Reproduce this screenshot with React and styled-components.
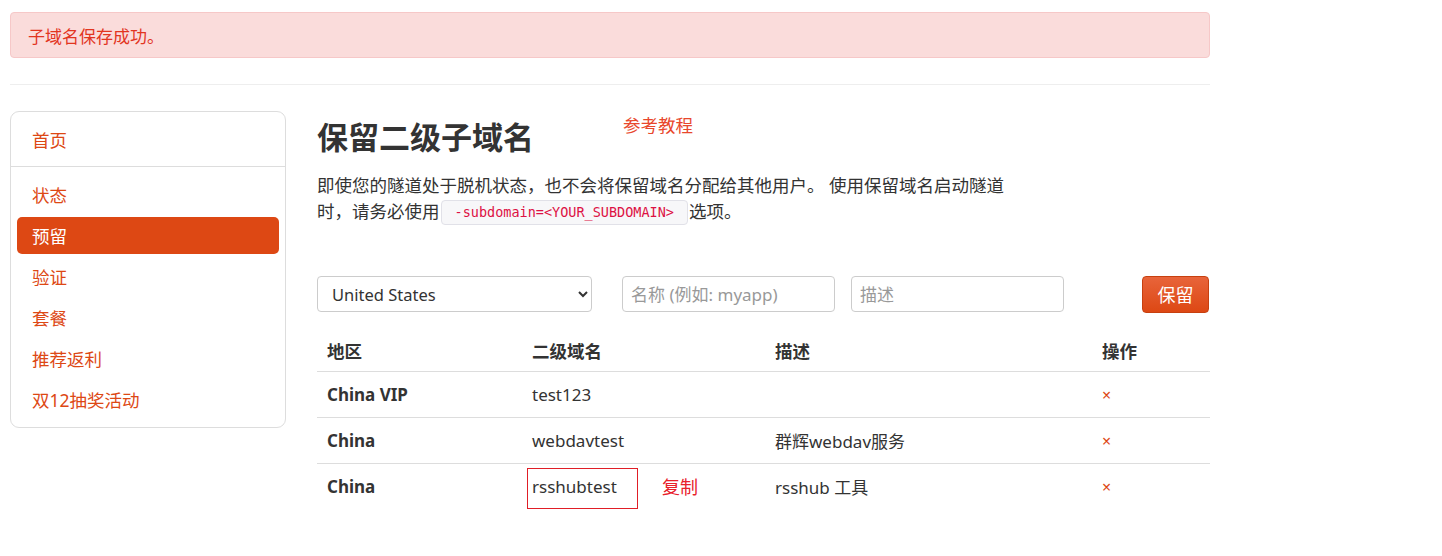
import React from 'react';
import styled, { createGlobalStyle } from 'styled-components';

const GlobalStyle = createGlobalStyle`
  body {
    margin: 0;
    background: #fff;
    font-family: "Noto Sans", "Noto Sans CJK SC", sans-serif;
    color: #333;
  }
`;

const menu = ['状态', '预留', '验证', '套餐', '推荐返利', '双12抽奖活动'];

const rows = [
  { region: 'China VIP', sub: 'test123', desc: '' },
  { region: 'China', sub: 'webdavtest', desc: '群辉webdav服务' },
  { region: 'China', sub: 'rsshubtest', desc: 'rsshub 工具', marked: true },
];

const App = () => (
  <>
    <GlobalStyle />
    <Page>
      <Alert>子域名保存成功。</Alert>
      <Rule />
      <Layout>
        <Sidebar>
          <Home>首页</Home>
          <Nav>
            {menu.map((item) => (
              <NavItem key={item} $active={item === '预留'}>{item}</NavItem>
            ))}
          </Nav>
        </Sidebar>
        <Main>
          <TitleRow>
            <Title>保留二级子域名</Title>
            <TutorialLink>参考教程</TutorialLink>
          </TitleRow>
          <Lead>
            即使您的隧道处于脱机状态，也不会将保留域名分配给其他用户。 使用保留域名启动隧道时，请务必使用
            <Code>-subdomain=&lt;YOUR_SUBDOMAIN&gt;</Code>选项。
          </Lead>
          <Form>
            <Select defaultValue="us">
              <option value="us">United States</option>
              <option value="cn">China</option>
              <option value="vip">China VIP</option>
            </Select>
            <Input placeholder="名称 (例如: myapp)" />
            <Input placeholder="描述" />
            <Spacer />
            <Button>保留</Button>
          </Form>
          <Table>
            <colgroup>
              <col style={{ width: 205 }} />
              <col style={{ width: 243 }} />
              <col style={{ width: 327 }} />
              <col />
            </colgroup>
            <thead>
              <tr>
                <Th>地区</Th>
                <Th>二级域名</Th>
                <Th>描述</Th>
                <Th>操作</Th>
              </tr>
            </thead>
            <tbody>
              {rows.map((row) => (
                <tr key={row.sub}>
                  <RegionCell>{row.region}</RegionCell>
                  <Td>
                    {row.marked ? (
                      <Marked>
                        <MarkBox>{row.sub}</MarkBox>
                        <CopyNote>复制</CopyNote>
                      </Marked>
                    ) : row.sub}
                  </Td>
                  <Td>{row.desc}</Td>
                  <Td><Remove>×</Remove></Td>
                </tr>
              ))}
            </tbody>
          </Table>
        </Main>
      </Layout>
    </Page>
  </>
);

export default App;

const Page = styled.div`
  width: 1200px;
  margin-left: 10px;
  padding-top: 12px;
`;

const Alert = styled.div`
  height: 46px;
  box-sizing: border-box;
  padding: 0 17px;
  display: flex;
  align-items: center;
  background: #fadcdb;
  border: 1px solid #f6c8c8;
  border-radius: 4px;
  color: #e2351f;
  font-size: 17px;
`;

const Rule = styled.div`
  height: 1px;
  background: #eeeeee;
  margin: 26px 0 26px;
`;

const Layout = styled.div`
  display: flex;
  align-items: flex-start;
  gap: 31px;
`;

const Sidebar = styled.div`
  width: 276px;
  box-sizing: border-box;
  border: 1px solid #dddddd;
  border-radius: 9px;
  padding-bottom: 9px;
`;

const Home = styled.div`
  height: 54px;
  padding-left: 21px;
  display: flex;
  align-items: center;
  color: #dd4814;
  font-size: 17.5px;
  border-bottom: 1px solid #dddddd;
`;

const Nav = styled.div`
  padding: 9px 6px 0;
  display: flex;
  flex-direction: column;
  gap: 4px;
`;

const NavItem = styled.div`
  height: 37px;
  display: flex;
  align-items: center;
  padding-left: 15px;
  border-radius: 5px;
  font-size: 17.5px;
  color: ${(p) => (p.$active ? '#ffffff' : '#dd4814')};
  background: ${(p) => (p.$active ? '#dd4814' : 'transparent')};
`;

const Main = styled.div`
  flex: 1;
  min-width: 0;
`;

const TitleRow = styled.div`
  position: relative;
  padding-top: 4px;
`;

const Title = styled.h1`
  margin: 0;
  font-size: 31px;
  line-height: 44px;
  font-weight: 700;
  color: #333;
`;

const TutorialLink = styled.span`
  position: absolute;
  left: 306px;
  top: 1px;
  font-size: 17.5px;
  color: #e8472c;
`;

const Lead = styled.p`
  width: 695px;
  margin: 13px 0 0;
  font-size: 17.5px;
  line-height: 26px;
  color: #333;
`;

const Code = styled.code`
  display: inline-block;
  margin: 0 1px;
  padding: 0 13px;
  line-height: 23px;
  font-family: "DejaVu Sans Mono", monospace;
  font-size: 13.5px;
  color: #dd1144;
  background: #f7f7f9;
  border: 1px solid #e1e1e8;
  border-radius: 4px;
  vertical-align: 1px;
`;

const Form = styled.div`
  display: flex;
  align-items: center;
  margin-top: 51px;
  height: 36px;
`;

const Select = styled.select`
  width: 275px;
  height: 36px;
  padding: 0 8px 0 10px;
  font-family: "Noto Sans", sans-serif;
  font-size: 16.5px;
  color: #333;
  background: #fff;
  border: 1px solid #cccccc;
  border-radius: 4px;
  margin-right: 30px;
`;

const Input = styled.input`
  width: 213px;
  height: 36px;
  box-sizing: border-box;
  padding: 0 8px;
  font-family: "Noto Sans", "Noto Sans CJK SC", sans-serif;
  font-size: 17px;
  border: 1px solid #cccccc;
  border-radius: 4px;
  margin-right: 16px;

  &::placeholder {
    color: #999;
  }
`;

const Spacer = styled.div`
  flex: 1;
`;

const Button = styled.button`
  width: 67px;
  height: 37px;
  margin-right: 1px;
  border: 1px solid #c7400f;
  border-radius: 4px;
  background: linear-gradient(#e8643a, #dd4814);
  color: #fff;
  font-family: "Noto Sans CJK SC", sans-serif;
  font-size: 18px;
`;

const Table = styled.table`
  width: 100%;
  margin-top: 17px;
  border-collapse: collapse;
  table-layout: fixed;
  font-size: 17px;
`;

const Th = styled.th`
  text-align: left;
  padding: 0 10px;
  height: 42px;
  vertical-align: middle;
  font-weight: 700;
  font-size: 17.5px;
  color: #333;
  border-bottom: 1px solid #dddddd;
`;

const Td = styled.td`
  height: 45px;
  padding: 0 10px;
  vertical-align: middle;
  color: #333;
  border-top: 1px solid #dddddd;
  tr:first-child > & {
    border-top: none;
  }
`;

const RegionCell = styled(Td)`
  font-weight: 700;
`;

const Marked = styled.div`
  position: relative;
`;

const MarkBox = styled.span`
  position: relative;
  z-index: 1;
  &::before {
    content: '';
    position: absolute;
    left: -5px;
    top: -7px;
    width: 111px;
    height: 41px;
    box-sizing: border-box;
    border: 1px solid #e01e26;
  }
`;

const CopyNote = styled.span`
  position: absolute;
  left: 130px;
  top: -2px;
  font-size: 18px;
  color: #e8202a;
`;

const Remove = styled.span`
  color: #dd4814;
  font-size: 16px;
`;
